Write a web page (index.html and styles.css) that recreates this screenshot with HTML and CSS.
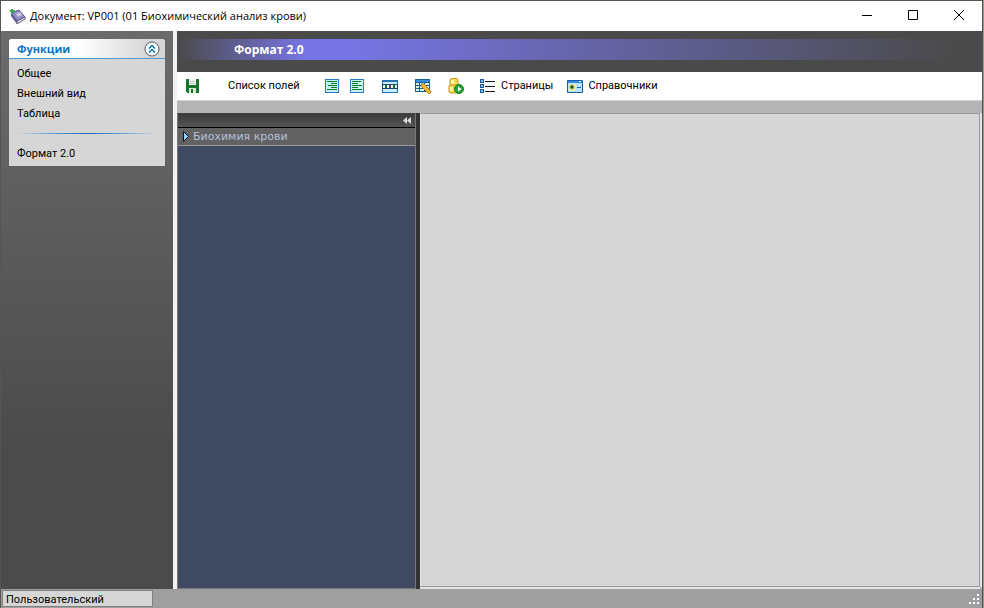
FILE: index.html
```html
<!DOCTYPE html>
<html lang="ru">
<head>
  <meta charset="UTF-8">
  <title>Документ: VP001 (01 Биохимический анализ крови)</title>
  <link rel="stylesheet" href="styles.css">
</head>
<body>

<div class="window">
  <header class="titlebar">
    <svg class="app-icon" width="17" height="17" viewBox="0 0 17 17">
      <path d="M2 5 10 2 16 9 8 13Z" fill="#8e8ccc" stroke="#5f5c9c"/>
      <path d="M2 5v3l6 8v-3z" fill="#5a5796"/>
      <path d="M8 13l8-4v2l-8 5z" fill="#e4e3ee" stroke="#5d5a78"/>
      <path d="M7 6l4-2 2 3-4 2z" fill="#d3ccd8"/>
      <path d="M3 1v5M1 3h5" stroke="#41a34a" stroke-width="2"/>
    </svg>
    <h1>Документ: VP001 (01 Биохимический анализ крови)</h1>
    <div class="window-buttons">
      <button type="button" aria-label="Свернуть"><svg width="12" height="12"><path d="M1 5.500h10" stroke="#000"/></svg></button>
      <button type="button" aria-label="Развернуть"><svg width="12" height="12"><path d="M1.500 .5h9v9h-9z" fill="none" stroke="#000"/></svg></button>
      <button type="button" aria-label="Закрыть"><svg width="12" height="12"><path d="M1 0l10 10M11 0L1 10" stroke="#000"/></svg></button>
    </div>
  </header>

  <div class="workspace">
    <nav class="sidebar">
      <section class="functions">
        <div class="functions-head">
          <h2>Функции</h2>
          <button type="button" aria-label="Скрыть функции">
            <svg width="16" height="16"><circle cx="8" cy="8" r="7" fill="#fff" stroke="#4b5965"/><path d="M5 7.500l3-3 3 3M5 11.500l3-3 3 3" fill="none" stroke="#0872bd" stroke-width="1.500"/></svg>
          </button>
        </div>
        <div class="functions-list">
          <a href="#">Общее</a>
          <a href="#">Внешний вид</a>
          <a href="#">Таблица</a>
          <hr>
          <a href="#">Формат 2.0</a>
        </div>
      </section>
    </nav>

    <main class="main">
      <div class="banner"><h2>Формат 2.0</h2></div>
      <div class="toolbar">
        <button type="button" class="tool save" aria-label="Сохранить">
          <svg width="14" height="14" shape-rendering="crispEdges"><path d="M0 0h13v14H1l-1-1z" fill="#14752b"/><path d="M3 0h7v6H3z" fill="#f3f3f3"/><path d="M4 2h5v1H4zM4 4h5v1H4z" fill="#c5c5c5"/><path d="M3 9h7v5H3z" fill="#d8ead8"/><path d="M5 10h2v4H5z" fill="#14752b"/></svg>
        </button>
        <button type="button" class="tool fields">Список полей</button>
        <button type="button" class="tool align-right" aria-label="Развернуть список">
          <svg width="14" height="14" shape-rendering="crispEdges"><path d="M0 0h14v14H0z" fill="#2a7cc4"/><path d="M1 1h12v12H1z" fill="#c4f2f5"/><path d="M2 2h10v1H2zM6 4h6v1H6zM3 6h9v1H3zM6 8h6v1H6zM2 10h10v1H2z" fill="#0b7a22"/></svg>
        </button>
        <button type="button" class="tool align-left" aria-label="Свернуть список">
          <svg width="14" height="14" shape-rendering="crispEdges"><path d="M0 0h14v14H0z" fill="#2a7cc4"/><path d="M1 1h12v12H1z" fill="#c4f2f5"/><path d="M2 2h9v1H2zM2 4h6v1H2zM2 6h10v1H2zM2 8h6v1H2zM2 10h10v1H2z" fill="#0b7a22"/></svg>
        </button>
        <button type="button" class="tool row" aria-label="Строка">
          <svg width="16" height="13" shape-rendering="crispEdges"><path d="M0 0h16v13H0z" fill="#2470b8"/><path d="M1 2h14v2H1zM1 9h14v3H1z" fill="#c9ecfd"/><path d="M0 4h16v5H0z" fill="#174b70"/><path d="M1 5h2v3H1zM5 5h2v3H5zM9 5h2v3H9zM13 5h2v3h-2z" fill="#e9f9ee"/><path d="M3 5h2v3H3zM11 5h2v3h-2z" fill="#12783c"/><path d="M7 5h2v3H7z" fill="#7e3268"/></svg>
        </button>
        <button type="button" class="tool table" aria-label="Изменить таблицу">
          <svg width="17" height="15"><g shape-rendering="crispEdges"><path d="M0 0h15v13H0z" fill="#17648c"/><path d="M1 1h13v2H1z" fill="#3a8ddb"/><path d="M1 4h3v2H1zM5 4h4v2H5zM10 4h4v2h-4zM1 7h3v2H1zM5 7h4v2H5zM10 7h4v2h-4zM1 10h3v2H1zM5 10h4v2H5z" fill="#dcf8ec"/></g><path d="M6 5l3 0 4 4 3 4-2 2-3-3-4-4z" fill="#f3bd36" stroke="#b87b14"/></svg>
        </button>
        <button type="button" class="tool data" aria-label="Выполнить запрос">
          <svg width="16" height="17"><path d="M2 1.500l2-1h5l1 1v5l-1 1H3l-1-1z" fill="#f6dc5a" stroke="#c3971e"/><path d="M1 8l1-1h7l2 1v6l-2 1H3l-2-1z" fill="#f4d545" stroke="#c3971e"/><path d="M3 2h3v4H3zM2 9h3v4H2z" fill="#fff4a1"/><circle cx="11" cy="11" r="4.500" fill="#28a43c" stroke="#137a28"/><path d="M10 8.500v5l3.500-2.500z" fill="#fff"/></svg>
        </button>
        <button type="button" class="tool pages">
          <svg width="15" height="14" shape-rendering="crispEdges"><path d="M0 0h4v4H0zM0 5h4v4H0zM0 10h4v4H0z" fill="#195797"/><path d="M1 1h2v2H1zM1 6h2v2H1zM1 11h2v2H1z" fill="#82bee6"/><path d="M5 2h10v1H5zM5 7h10v1H5zM5 12h10v1H5z" fill="#111827"/></svg>
          Страницы
        </button>
        <button type="button" class="tool books">
          <svg width="16" height="13"><path d="M.5.500h15v12H.500z" fill="#b9e3ff" stroke="#155eaa"/><path d="M1 1h14v2H1z" fill="#348bdf"/><path d="M12 1h2v1h-2z" fill="#fff"/><path d="M2 4h7v7H2z" fill="#e4edba"/><circle cx="5" cy="7" r="2" fill="#244b2b" stroke="#9eaf33"/><path d="M10 7.500h4" stroke="#1767af"/></svg>
          Справочники
        </button>
      </div>

      <div class="content">
        <aside class="tree">
          <div class="tree-head">
            <button type="button" aria-label="Скрыть панель"><svg width="8" height="7"><path d="M4 0v7L0 3.500zM8 0v7L4 3.500z" fill="#ddd"/></svg></button>
          </div>
          <button type="button" class="tree-item">
            <svg width="6" height="11"><path d="M.5.500v10l5-5z" fill="#8fd0fa" stroke="#111"/></svg>
            Биохимия крови
          </button>
        </aside>
        <div class="splitter"></div>
        <section class="page"></section>
      </div>
    </main>
  </div>

  <footer class="statusbar">
    <div class="status-cell">Пользовательский</div>
    <svg class="grip" width="12" height="13" shape-rendering="crispEdges"><path d="M8 0h2v2H8zM4 4h2v2H4zM8 4h2v2H8zM0 8h2v2H0zM4 8h2v2H4zM8 8h2v2H8z" fill="#fff"/></svg>
  </footer>
</div>

</body>
</html>
```

FILE: styles.css
```css
* {
  box-sizing: border-box;
}
body {
  margin: 0;
  padding-right: 1px;
  background: #96968e;
  font-family: "Roboto", "Liberation Sans", sans-serif;
  font-size: 11px;
  line-height: 20px;
  color: #000;
}
h1, h2 {
  margin: 0;
}
button {
  padding: 0;
  border: 0;
  background: none;
  font: inherit;
  color: inherit;
}
svg {
  display: block;
  flex: none;
}
a {
  color: inherit;
  text-decoration: none;
}
.window {
  display: flex;
  flex-direction: column;
  height: 100vh;
  border: 1px solid #565651;
  border-bottom: 0;
}

/* Title bar */
.titlebar {
  display: flex;
  align-items: center;
  flex: none;
  height: 30px;
  padding-left: 8px;
  background: #fff;
}
.titlebar h1 {
  flex: 1;
  margin-left: 4px;
  font: 11px/20px "Open Sans", "Noto Sans", sans-serif;
}
.window-buttons {
  display: flex;
}
.window-buttons button {
  display: flex;
  justify-content: center;
  align-items: center;
  width: 46px;
  height: 28px;
}

.workspace {
  display: flex;
  flex: 1;
  min-height: 0;
}

/* Sidebar */
.sidebar {
  flex: none;
  width: 176px;
  padding: 8px;
  border-right: 4px solid #f2f2f2;
  background: linear-gradient(#6b6b6b, #4b4b4b 75%);
}
.functions {
  overflow: hidden;
  width: 156px;
  border-radius: 3px 3px 0 0;
  background: #d6d6d6;
}
.functions-head {
  display: flex;
  justify-content: space-between;
  align-items: center;
  height: 20px;
  padding: 0 5px 0 8px;
  border-bottom: 1px solid #5199d5;
  background: linear-gradient(90deg, #fff 45%, #d6d6d6 90%);
}
.functions-head h2 {
  font: bold 11px/20px "Open Sans", sans-serif;
  color: #0873c6;
}
.functions-list {
  display: flex;
  flex-direction: column;
  padding: 5px 8px 2px;
}
.functions-list hr {
  width: 100%;
  height: 1px;
  margin: 9px 0 10px;
  border: 0;
  background: linear-gradient(90deg, #d6d6d6, #5b9fdc 25%, #1468b8 50%, #5b9fdc 75%, #d6d6d6);
}

/* Main area */
.main {
  display: flex;
  flex-direction: column;
  flex: 1;
  min-width: 0;
  background: #b4b4b4;
}
.banner {
  flex: none;
  padding: 8px 0 12px;
  background: #4a4a4a;
}
.banner h2 {
  padding-left: 57px;
  background: linear-gradient(90deg, #4a4a4a, #7775e5 16%, #7775e5 21%, #4a4a4a 97%);
  font: bold 12px/21px "Open Sans", sans-serif;
  color: #fff;
}
.toolbar {
  display: flex;
  align-items: center;
  flex: none;
  height: 29px;
  padding-left: 9px;
  border-bottom: 1px solid #d2d2d2;
  background: #fff;
  line-height: 22px;
}
.tool {
  display: flex;
  align-items: center;
  gap: 6px;
  white-space: nowrap;
}
.fields {
  width: 97px;
  margin-left: 28px;
}
.align-left {
  margin-left: 11px;
}
.row {
  margin-left: 18px;
}
.table {
  margin-left: 17px;
}
.data, .pages {
  margin-left: 16px;
}
.books {
  margin-left: 14px;
  gap: 5px;
}
.content {
  display: flex;
  flex: 1;
  min-height: 0;
  margin-top: 12px;
}
.tree {
  flex: none;
  width: 239px;
  border: 1px solid #77777b;
  border-top-color: #444;
  background: #3f4a62;
}
.tree-head {
  display: flex;
  justify-content: flex-end;
  align-items: center;
  height: 14px;
  padding-right: 4px;
  border-bottom: 1px solid #000;
  background: linear-gradient(#3b3b3b, #555);
}
.tree-item {
  display: flex;
  align-items: center;
  gap: 4px;
  width: 100%;
  height: 18px;
  padding-left: 5px;
  border-bottom: 1px solid #999;
  background: #626262;
  font: 11px/17px "DejaVu Sans", sans-serif;
  color: #b6bed8;
}
.splitter {
  flex: none;
  width: 4px;
  background: #333;
}
.page {
  flex: 1;
  margin: 0 2px 2px 0;
  border: 1px solid #999;
  border-left-color: #e4e4e4;
  background: #d6d6d6;
  box-shadow: 0 2px #e4e4e4, 2px 0 #e4e4e4;
}

/* Status bar */
.statusbar {
  display: flex;
  justify-content: space-between;
  flex: none;
  height: 19px;
  padding: 1px;
  background: #9f9f9f;
}
.status-cell {
  width: 151px;
  padding-left: 3px;
  border: 1px solid #808080;
  background: #d6d6d6;
  line-height: 17px;
}
.grip {
  align-self: flex-end;
}
```
